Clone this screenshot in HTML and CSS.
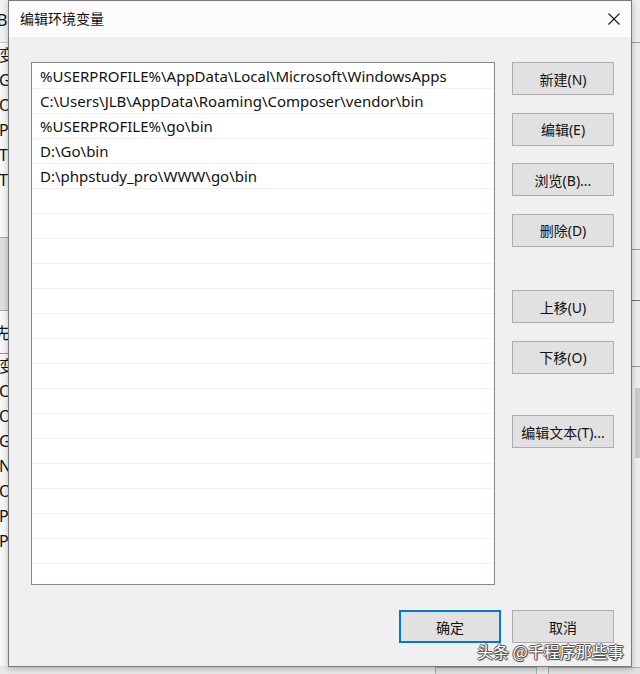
FILE: index.html
```html
<!DOCTYPE html>
<html lang="zh">
<head>
<meta charset="utf-8">
<title>编辑环境变量</title>
<link rel="stylesheet" href="styles.css">
</head>
<body>
<div class="desktop">
  <div class="backwin">
    <div class="back-left">
      <div class="bl-row bl-top">B</div>
      <div class="bl-row">变</div>
      <div class="bl-row">GO</div>
      <div class="bl-row">OI</div>
      <div class="bl-row">Pa</div>
      <div class="bl-row">TE</div>
      <div class="bl-row">TN</div>
      <div class="bl-gap"></div>
      <div class="bl-band"></div>
      <div class="bl-row bl-head">先</div>
      <div class="bl-row">变</div>
      <div class="bl-row">Co</div>
      <div class="bl-row">OI</div>
      <div class="bl-row">GO</div>
      <div class="bl-row">NU</div>
      <div class="bl-row">OS</div>
      <div class="bl-row">Pa</div>
      <div class="bl-row">PA</div>
    </div>
    <div class="back-right">
      <div class="br-line br-1"></div>
      <div class="br-line br-2"></div>
      <div class="br-line br-3"></div>
      <div class="br-line br-4"></div>
      <div class="br-thumb"></div>
    </div>
    <div class="back-bottom">
      <div class="bb-btn bb-1"></div>
      <div class="bb-btn bb-2"></div>
    </div>
  </div>

  <div class="dialog">
    <div class="titlebar">
      <span class="title">编辑环境变量</span>
      <svg class="close" width="12" height="12" viewBox="0 0 12 12" aria-hidden="true">
        <path d="M0.5 0.5 L11.5 11.5 M11.5 0.5 L0.5 11.5" stroke="#1a1a1a" stroke-width="1.1" fill="none"/>
      </svg>
    </div>
    <div class="body">
      <div class="main">
        <div class="list">
          <div class="row">%USERPROFILE%\AppData\Local\Microsoft\WindowsApps</div>
          <div class="row">C:\Users\JLB\AppData\Roaming\Composer\vendor\bin</div>
          <div class="row">%USERPROFILE%\go\bin</div>
          <div class="row">D:\Go\bin</div>
          <div class="row">D:\phpstudy_pro\WWW\go\bin</div>
          <div class="row"></div><div class="row"></div><div class="row"></div>
          <div class="row"></div><div class="row"></div><div class="row"></div>
          <div class="row"></div><div class="row"></div><div class="row"></div>
          <div class="row"></div><div class="row"></div><div class="row"></div>
          <div class="row"></div><div class="row"></div><div class="row"></div>
          <div class="row"></div>
        </div>
        <div class="side">
          <button class="btn">新建(N)</button>
          <button class="btn">编辑(E)</button>
          <button class="btn">浏览(B)...</button>
          <button class="btn">删除(D)</button>
          <button class="btn group">上移(U)</button>
          <button class="btn">下移(O)</button>
          <button class="btn group2">编辑文本(T)...</button>
        </div>
      </div>
      <div class="footer">
        <button class="btn primary">确定</button>
        <button class="btn">取消</button>
      </div>
    </div>
  </div>

  <div class="watermark">头条 @千程序那些事</div>
</div>
</body>
</html>
```
FILE: styles.css
```css
html, body {
  margin: 0;
  padding: 0;
}
body {
  width: 640px;
  height: 674px;
  overflow: hidden;
  background: #ececec;
  font-family: "Noto Sans", "Noto Sans CJK SC", sans-serif;
  color: #000;
}
.desktop {
  position: relative;
  width: 640px;
  height: 674px;
  overflow: hidden;
}

/* window behind the dialog */
.backwin {
  position: absolute;
  inset: 0;
  background: #f0f0f0;
}
.back-left {
  position: absolute;
  left: 0;
  top: 0;
  width: 8px;
  height: 674px;
  overflow: hidden;
  background: #f7f7f7;
  display: flex;
  flex-direction: column;
}
.bl-row {
  height: 25px;
  line-height: 25px;
  font-size: 16px;
  margin-left: -1px;
  white-space: nowrap;
  color: #111;
  flex: none;
}
.bl-top {
  height: 42px;
  line-height: 40px;
  margin-left: -3px;
  border-bottom: 1px solid #c8c8c8;
  background: #f2f2f2;
}
.bl-gap {
  height: 44px;
  flex: none;
}
.bl-band {
  height: 72px;
  flex: none;
  background: #dedede;
  border-top: 1px solid #a8a8a8;
  border-bottom: 1px solid #a8a8a8;
}
.bl-head {
  height: 42px;
  line-height: 44px;
  margin-left: -6px;
  border-bottom: 1px solid #9a9a9a;
}
.back-right {
  position: absolute;
  right: 0;
  top: 0;
  width: 9px;
  height: 674px;
  background: #eeeeee;
}
.br-line {
  position: absolute;
  left: 0;
  right: 0;
  height: 1px;
  background: #9c9c9c;
}
.br-1 { top: 42px; }
.br-2 { top: 249px; }
.br-3 { top: 300px; background: #6e6e6e; }
.br-4 { top: 366px; }
.br-thumb {
  position: absolute;
  left: 4px;
  right: 0;
  top: 388px;
  height: 70px;
  background: #c9c9c9;
}
.back-bottom {
  position: absolute;
  left: 0;
  right: 0;
  bottom: 0;
  height: 8px;
  background: #e8e8e8;
}
.bb-btn {
  position: absolute;
  top: 1px;
  height: 12px;
  border: 1px solid #adadad;
  background: #e1e1e1;
}
.bb-1 { left: 435px; width: 100px; }
.bb-2 { left: 548px; width: 100px; }

/* dialog */
.dialog {
  position: absolute;
  left: 8px;
  top: 0;
  width: 622px;
  height: 665px;
  border: 1px solid #7a7a7a;
  background: #f0f0f0;
  box-shadow: 0 2px 6px rgba(0,0,0,0.25);
  display: flex;
  flex-direction: column;
}
.titlebar {
  height: 36px;
  flex: none;
  background: #fdfcfd;
  display: flex;
  align-items: center;
  justify-content: space-between;
  padding: 0 11px 0 11px;
  box-sizing: border-box;
}
.title {
  font-family: "Noto Sans CJK SC", sans-serif;
  font-size: 14px;
  color: #111;
  margin-top: -2px;
}
.close {
  display: block;
}
.body {
  flex: 1;
  display: flex;
  flex-direction: column;
  padding: 25px 0 0 22px;
}
.main {
  display: flex;
  gap: 17px;
}
.list {
  width: 462px;
  height: 520px;
  border: 1px solid #828790;
  background: #ffffff;
  overflow: hidden;
  padding-top: 1px;
  box-sizing: content-box;
}
.row {
  height: 24px;
  border-bottom: 1px solid #f0f0f0;
  line-height: 24px;
  padding-left: 8px;
  font-size: 15px;
  white-space: nowrap;
  color: #111;
}
.side {
  display: flex;
  flex-direction: column;
  gap: 17.5px;
}
.btn {
  width: 102px;
  height: 33px;
  border: 1px solid #adadad;
  background: #e1e1e1;
  font-family: "Noto Sans", "Noto Sans CJK SC", sans-serif;
  font-size: 14px;
  color: #111;
  padding: 0;
  margin: 0;
  box-sizing: border-box;
  flex: none;
}
.btn.group { margin-top: 26px; }
.btn.group2 { margin-top: 24px; }
.footer {
  display: flex;
  justify-content: flex-end;
  gap: 11px;
  margin-top: 25px;
  padding-right: 17px;
}
.btn.primary {
  border: 2px solid #0078d7;
}

.watermark {
  position: absolute;
  left: 477px;
  top: 642px;
  font-family: "Noto Sans CJK SC", sans-serif;
  font-size: 16px;
  line-height: 18px;
  color: #ffffff;
  white-space: nowrap;
  text-shadow: 1px 0 0 #555, -1px 0 0 #555, 0 1px 0 #555, 0 -1px 0 #555, 1px 1px 1px #444;
}
```
